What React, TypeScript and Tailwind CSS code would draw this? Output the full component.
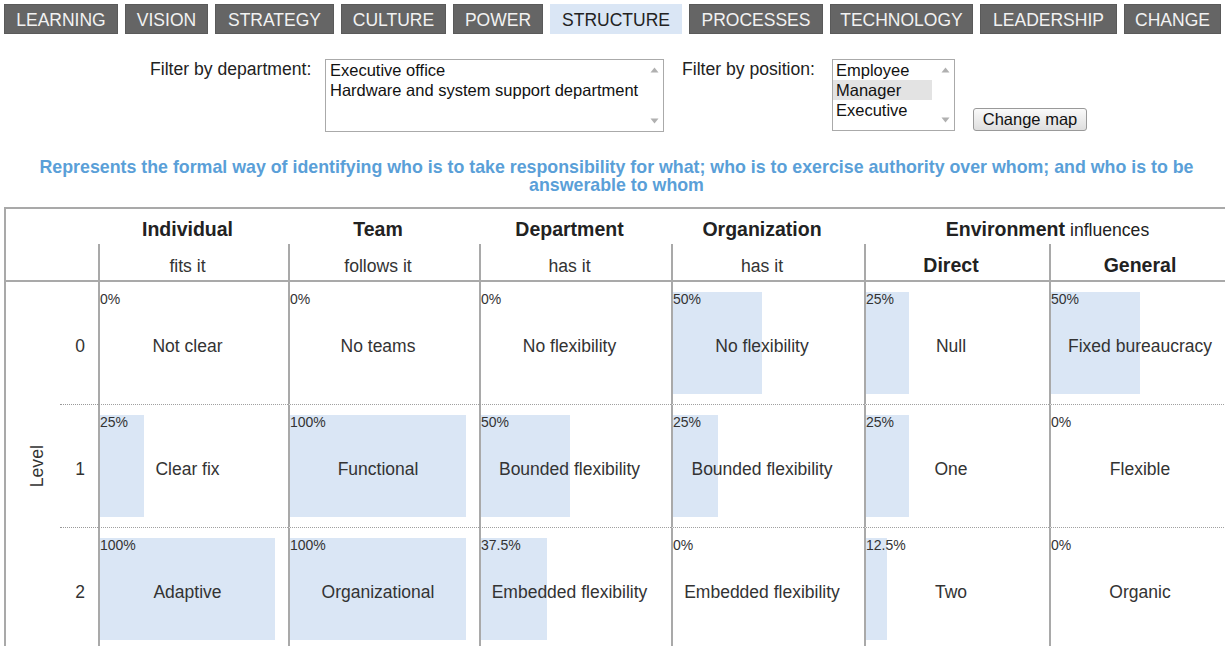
import React from "react";

const tabs: { label: string; w: string; active?: boolean }[] = [
  { label: "LEARNING", w: "w-[114px]" },
  { label: "VISION", w: "w-[83px]" },
  { label: "STRATEGY", w: "w-[119px]" },
  { label: "CULTURE", w: "w-[105px]" },
  { label: "POWER", w: "w-[90px]" },
  { label: "STRUCTURE", w: "w-[132px]", active: true },
  { label: "PROCESSES", w: "w-[134px]" },
  { label: "TECHNOLOGY", w: "w-[143px]" },
  { label: "LEADERSHIP", w: "w-[137px]" },
  { label: "CHANGE", w: "w-[97px]" },
];

const rows: { level: string; cells: [number, string][] }[] = [
  {
    level: "0",
    cells: [
      [0, "Not clear"],
      [0, "No teams"],
      [0, "No flexibility"],
      [50, "No flexibility"],
      [25, "Null"],
      [50, "Fixed bureaucracy"],
    ],
  },
  {
    level: "1",
    cells: [
      [25, "Clear fix"],
      [100, "Functional"],
      [50, "Bounded flexibility"],
      [25, "Bounded flexibility"],
      [25, "One"],
      [0, "Flexible"],
    ],
  },
  {
    level: "2",
    cells: [
      [100, "Adaptive"],
      [100, "Organizational"],
      [37.5, "Embedded flexibility"],
      [0, "Embedded flexibility"],
      [12.5, "Two"],
      [0, "Organic"],
    ],
  },
];

function ScrollArrows() {
  return (
    <div className="absolute right-0 top-0 bottom-0 w-[18px] flex flex-col justify-between items-center py-[7px]">
      <svg width="9" height="6" viewBox="0 0 9 6">
        <polygon points="4.5,0.5 8.5,5.5 0.5,5.5" fill="#b0b0b0" />
      </svg>
      <svg width="9" height="6" viewBox="0 0 9 6">
        <polygon points="0.5,0.5 8.5,0.5 4.5,5.5" fill="#b0b0b0" />
      </svg>
    </div>
  );
}

function DataCell({ pct, text }: { pct: number; text: string }) {
  return (
    <div
      className="border-l-2 border-l-[#a9a9a9] border-b border-b-[#a0a0a0] border-dotted pr-[13px] h-[123px]"
      style={{ borderLeftStyle: "solid" }}
    >
      <div className="relative mt-[10px] h-[102px]">
        {pct > 0 && (
          <div className="absolute left-0 top-0 h-full bg-[#dae6f5]" style={{ width: `${pct}%` }} />
        )}
        <div className="absolute left-0 top-0 text-[14px] leading-[15px] text-[#333]">{`${pct}%`}</div>
        <div className="relative h-full flex items-center justify-center text-[17.5px] text-[#333] pt-[6px]">{text}</div>
      </div>
    </div>
  );
}

export default function App() {
  return (
    <div className="w-[1225px] h-[646px] overflow-hidden bg-white text-[#333] font-['Liberation_Sans',Arial,sans-serif]">
      <div className="w-[1245px]">
        {/* nav */}
        <div className="flex gap-[7px] pl-[4px] pt-[4px]">
          {tabs.map((t) => (
            <div
              key={t.label}
              className={`${t.w} h-[30px] flex items-center justify-center pt-[3px] text-[17.5px] ${
                t.active ? "bg-[#dae6f5] text-[#222]" : "bg-[#656565] text-[#f2f2f2] border border-[#5a5a5a]"
              }`}
            >
              {t.label}
            </div>
          ))}
        </div>

        {/* filters */}
        <div className="flex items-start mt-[25px] pl-[150px]">
          <div className="w-[175px] text-[17.6px] leading-[20px] text-[#222]">Filter by department:</div>
          <div className="relative w-[339px] h-[73px] border border-[#aaa] bg-white text-[16.5px] leading-[20px] text-[#111]">
            <div className="pl-[4px]">Executive office</div>
            <div className="pl-[4px]">Hardware and system support department</div>
            <ScrollArrows />
          </div>
          <div className="w-[150px] ml-[18px] text-[17.6px] leading-[20px] text-[#222]">Filter by position:</div>
          <div className="relative w-[123px] h-[72px] border border-[#aaa] bg-white text-[16.5px] leading-[20px] text-[#111]">
            <div className="pl-[3px] mr-[22px]">Employee</div>
            <div className="pl-[3px] mr-[22px] bg-[#e3e3e3]">Manager</div>
            <div className="pl-[3px] mr-[22px]">Executive</div>
            <ScrollArrows />
          </div>
          <div className="ml-[18px] mt-[49px] w-[114px] h-[23px] border border-[#999] rounded-[3px] bg-gradient-to-b from-[#fafafa] to-[#dedede] flex items-center justify-center text-[16.5px] text-[#111]">
            Change map
          </div>
        </div>

        {/* intro */}
        <div className="w-[1233px] mt-[26px] text-center font-bold text-[#5a9fd8] text-[17.8px] leading-[18px] px-[20px]">
          Represents the formal way of identifying who is to take responsibility for what; who is to exercise authority over whom; and who is to be answerable to whom
        </div>

        {/* table */}
        <div className="ml-[4px] mt-[13px] border-l-2 border-t-2 border-[#a9a9a9]">
          <div className="grid grid-cols-[54px_38px_190px_191px_192px_193px_185px_193px]">
            {/* header row 1 */}
            <div className="col-span-2 h-[35px]" />
            {["Individual", "Team", "Department", "Organization"].map((h) => (
              <div key={h} className="h-[35px] pl-[2px] pr-[13px] flex items-center justify-center pt-[6px] font-bold text-[19.5px] text-[#222]">
                {h}
              </div>
            ))}
            <div className="col-span-2 h-[35px] pl-[2px] pr-[13px] flex items-center justify-center pt-[6px] text-[#222]">
              <span className="font-bold text-[19.5px]">Environment</span>
              <span className="text-[17.6px] ml-[5px] pt-[2px]">influences</span>
            </div>

            {/* header row 2 */}
            <div className="col-span-2 h-[38px] border-b-2 border-[#a9a9a9]" />
            {["fits it", "follows it", "has it", "has it"].map((h, i) => (
              <div key={i} className="h-[38px] border-l-2 border-b-2 border-[#a9a9a9] pr-[13px] flex items-center justify-center pt-[8px] text-[17.6px] text-[#333]">
                {h}
              </div>
            ))}
            {["Direct", "General"].map((h) => (
              <div key={h} className="h-[38px] border-l-2 border-b-2 border-[#a9a9a9] pr-[13px] flex items-center justify-center pt-[8px] font-bold text-[19.5px] text-[#222]">
                {h}
              </div>
            ))}

            {/* body */}
            <div className="row-span-3 flex items-center justify-center pl-[8px]">
              <div className="-rotate-90 text-[17.6px] text-[#333] whitespace-nowrap">Level</div>
            </div>
            {rows.map((r) => (
              <React.Fragment key={r.level}>
                <div className="h-[123px] border-b border-dotted border-[#999] flex items-center justify-end pr-[13px] pt-[6px] text-[17.5px] text-[#333]">
                  {r.level}
                </div>
                {r.cells.map(([p, t], i) => (
                  <DataCell key={i} pct={p} text={t} />
                ))}
              </React.Fragment>
            ))}
          </div>
        </div>
      </div>
    </div>
  );
}
